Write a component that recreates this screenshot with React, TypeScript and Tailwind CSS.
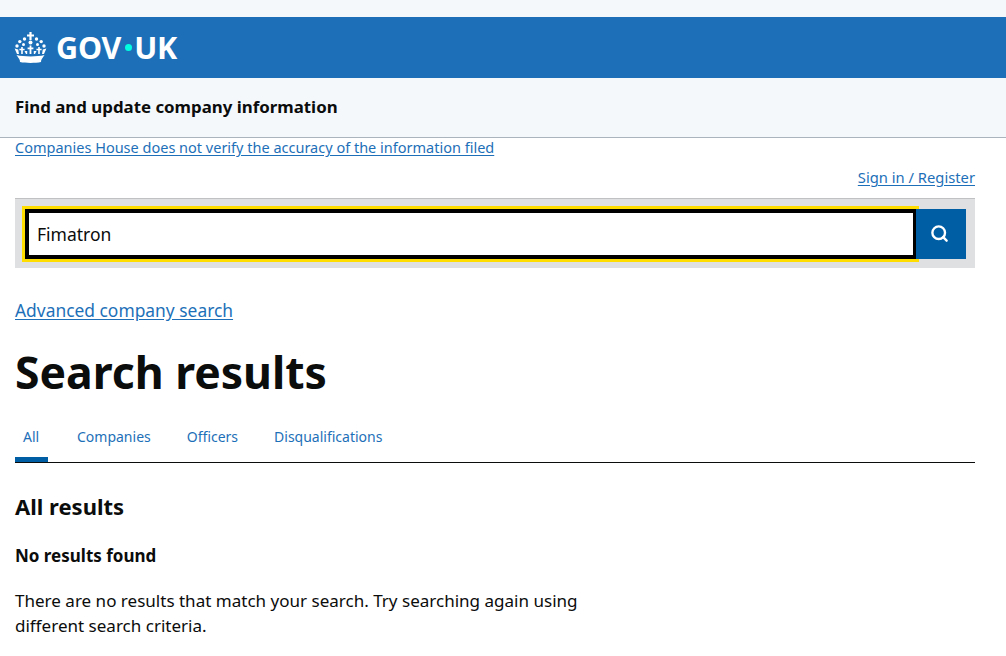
import { Search } from 'lucide-react';

const font = "font-['Noto_Sans',sans-serif]";

function Crown() {
  return (
    <svg width="33" height="31" viewBox="0 0 33 31" fill="#fff">
      <path d="M15.400 0h2.200v2.400H20v2.100h-2.400V8h-2.200V4.500H13V2.400h2.400z" />
      <circle cx="16.500" cy="10.500" r="2" />
      <circle cx="10.500" cy="7" r="1.700" />
      <circle cx="22.500" cy="7" r="1.700" />
      <circle cx="5.800" cy="9.600" r="1.700" />
      <circle cx="27.200" cy="9.600" r="1.700" />
      <circle cx="3" cy="14" r="1.700" />
      <circle cx="30" cy="14" r="1.700" />
      <circle cx="9.500" cy="12.500" r="1.500" />
      <circle cx="23.500" cy="12.500" r="1.500" />
      <path d="M15.600 13.500h1.800v2h2v1.700h-2V22h-1.800v-4.800h-2v-1.700h2z" />
      <path d="M7.200 15h1.600v1.800h1.800v1.500H8.800V22H7.200v-3.700H5.400v-1.500h1.800z" />
      <path d="M24.200 15h1.600v1.800h1.800v1.500h-1.800V22h-1.600v-3.700h-1.800v-1.500h1.800z" />
      <path d="M.6 16.500 3 22h2l-.8-4.400zM32.400 16.500 30 22h-2l.8-4.400zM10.500 19l1.500 3h1.200v-3zM22.500 19 21 22h-1.200v-3z" />
      <path d="M2.500 23c4 1 8.500 1.400 14 1.400S26.500 24 30.500 23l-2.700 4c-.5.8-.8 1.800-.8 3-3 .6-6.500.9-10.500.9s-7.500-.3-10.500-.9c0-1.200-.3-2.200-.8-3z" />
    </svg>
  );
}

export default function App() {
  return (
    <div className={`${font} bg-white min-h-[656px] text-[#0b0c0c]`}>
      <div className="h-[17px] bg-[#f4f8fb]" />
      <header className="h-[61px] bg-[#1d70b8] flex items-center pl-[14px] gap-[9px]">
        <Crown />
        <span className="flex items-center text-white text-[30.5px] leading-none font-bold tracking-[-0.2px]">
          GOV<span className="w-[7px] h-[7px] rounded-full bg-[#00ffe0] ml-[3.5px] mr-[2.5px]" />UK
        </span>
      </header>
      <div className="h-[60px] bg-[#f4f8fb] border-b border-[#a9b4bd] flex items-center px-[15px]">
        <a className="text-[16.85px] font-bold leading-none">Find and update company information</a>
      </div>

      <main className="px-[15px] w-[990px]">
        <p className="-mt-px h-[20px] leading-[20px] text-[14.5px]">
          <a className="text-[#1d70b8] underline underline-offset-2">Companies House does not verify the accuracy of the information filed</a>
        </p>
        <p className="mt-[10px] h-[20px] leading-[20px] text-[14.75px] text-right">
          <a className="text-[#1d70b8] underline underline-offset-2">Sign in / Register</a>
        </p>
        <form className="mt-[11px] h-[70px] bg-[#dee0e2] border-t border-[#bfc1c3] flex items-center pl-[10px] pr-[9px]">
          <input
            readOnly
            value="Fimatron"
            className="flex-1 min-w-0 h-[50px] box-border border-[4px] border-r-[3px] border-black outline-[3px] outline-[#ffdd00] bg-white pl-[8px] text-[17.5px] text-[#0b0c0c]"
          />
          <button type="button" className="relative w-[50px] h-[50px] bg-[#005ea5] flex items-center justify-center pr-[3px] text-white">
            <Search size={19} strokeWidth={3} />
          </button>
        </form>

        <p className="mt-[29px] h-[26px] leading-[26px] text-[17.4px]">
          <a className="text-[#1d70b8] underline underline-offset-2">Advanced company search</a>
        </p>
        <h1 className="mt-[22px] text-[44.5px] leading-[54px] font-bold">Search results</h1>

        <nav className="mt-[18px] h-[46px] border-b border-[#0b0c0c] flex text-[14px] text-[#1d70b8]">
          <a className="w-[33px] h-[45px] border-b-[5px] border-[#005ea5] pt-[9px] pl-[8px]">All</a>
          <a className="ml-[29px] pt-[9px]">Companies</a>
          <a className="ml-[36px] pt-[9px]">Officers</a>
          <a className="ml-[36px] pt-[9px]">Disqualifications</a>
        </nav>

        <h2 className="mt-[26px] text-[22px] leading-[34px] font-bold">All results</h2>
        <h3 className="mt-[20px] text-[17px] leading-[25px] font-bold">No results found</h3>
        <p className="mt-[20px] w-[600px] text-[17.05px] leading-[25px]">
          There are no results that match your search. Try searching again using different search criteria.
        </p>
      </main>
    </div>
  );
}
